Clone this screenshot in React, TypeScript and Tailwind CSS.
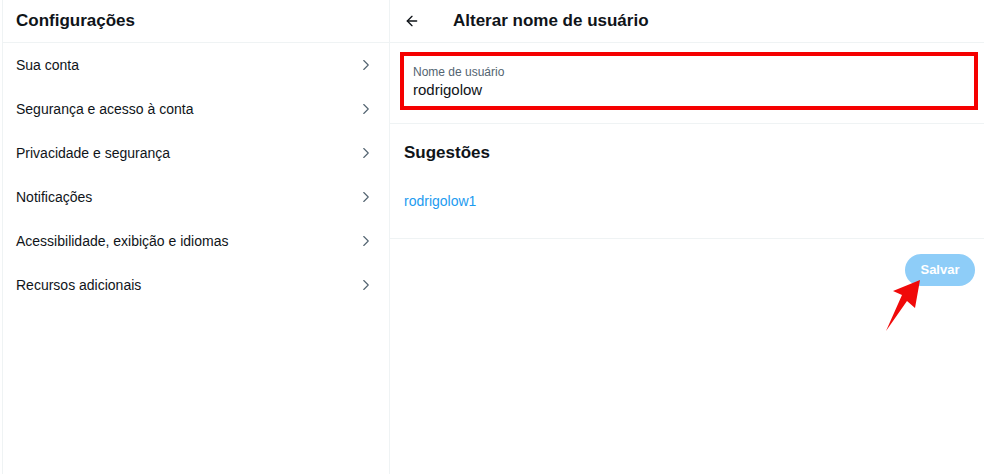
import { ArrowLeft, ChevronRight } from 'lucide-react';

const MENU = [
    'Sua conta',
    'Segurança e acesso à conta',
    'Privacidade e segurança',
    'Notificações',
    'Acessibilidade, exibição e idiomas',
    'Recursos adicionais',
];

export default function App() {
    return (
        <div
            className="relative flex h-[474px] w-[984px] overflow-hidden bg-white text-[#0f1419]"
            style={{ fontFamily: '"Liberation Sans", Arial, sans-serif' }}
        >
            {/* Settings menu */}
            <div className="ml-[2px] flex w-[388px] flex-col border-x border-[#eff3f4]">
                <div className="flex h-[43px] items-center border-b border-[#eff3f4] px-[13px]">
                    <h1 className="text-[17px] font-bold">Configurações</h1>
                </div>
                <div className="flex flex-col">
                    {MENU.map((item) => (
                        <div key={item} className="flex h-[44px] items-center justify-between pl-[13px] pr-[14px]">
                            <span className="text-[14px]">{item}</span>
                            <ChevronRight className="h-[18px] w-[18px] text-[#536471]" strokeWidth={1.5} />
                        </div>
                    ))}
                </div>
            </div>

            {/* Change username */}
            <div className="flex flex-1 flex-col">
                <div className="flex h-[43px] items-center border-b border-[#eff3f4] pl-[14px]">
                    <ArrowLeft className="h-[16px] w-[16px]" strokeWidth={2} />
                    <h2 className="ml-[33px] text-[17px] font-bold">Alterar nome de usuário</h2>
                </div>
                <div className="border-b border-[#eff3f4] pb-[13px] pl-[10px] pr-[6px] pt-[9px]">
                    <div className="flex h-[58px] flex-col justify-center border-[4px] border-[#f50000] px-[9px] pt-[2px]">
                        <span className="text-[12px] leading-[16px] text-[#536471]">Nome de usuário</span>
                        <span className="text-[15px] leading-[20px]">rodrigolow</span>
                    </div>
                </div>
                <div className="border-b border-[#eff3f4] px-[14px] pb-[26px] pt-[16px]">
                    <h3 className="text-[17px] font-bold">Sugestões</h3>
                    <div className="mt-[25px] text-[14px] text-[#1d9bf0]">rodrigolow1</div>
                </div>
                <div className="flex justify-end pr-[9px] pt-[15px]">
                    <button className="flex h-[32px] w-[70px] items-center justify-center rounded-full bg-[#8ecdf8] text-[13px] font-bold text-white">
                        Salvar
                    </button>
                </div>
            </div>

            {/* Red pointer arrow */}
            <svg className="absolute left-[880px] top-[276px]" width="46" height="60" viewBox="0 0 46 60">
                <path d="M40 4 L35 32 L27 25 L6 55 L22 19 L13 15 Z" fill="#f00a0a" />
            </svg>
        </div>
    );
}
